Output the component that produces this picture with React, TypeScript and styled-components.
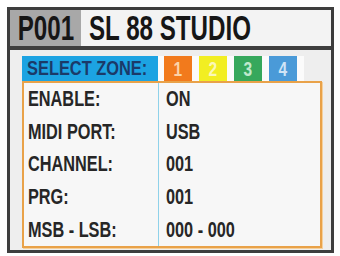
import { createGlobalStyle } from 'styled-components'
import styled from 'styled-components'

const GlobalStyle = createGlobalStyle`
  html, body {
    margin: 0;
    padding: 0;
    background: #ffffff;
  }
  body {
    font-family: 'Liberation Sans', Arial, sans-serif;
  }
`

type Zone = { id: number; bg: string; fg: string }

const ZONES: Zone[] = [
  { id: 1, bg: '#f27a1c', fg: '#fbd3a8' },
  { id: 2, bg: '#f2ee22', fg: '#fbf8b8' },
  { id: 3, bg: '#36a85c', fg: '#bfe8cc' },
  { id: 4, bg: '#4a9ad8', fg: '#cfe4f6' },
]

const ROWS: [string, string][] = [
  ['ENABLE:', 'ON'],
  ['MIDI PORT:', 'USB'],
  ['CHANNEL:', '001'],
  ['PRG:', '001'],
  ['MSB - LSB:', '000 - 000'],
]

export default function App() {
  return (
    <>
      <GlobalStyle />
      <Screen>
        <Header>
          <ProgramSlot>
            <Condensed $origin="center" $scale={0.69}>
              P001
            </Condensed>
          </ProgramSlot>
          <Title>
            <Condensed $scale={0.69}>SL 88 STUDIO</Condensed>
          </Title>
        </Header>

        <Body>
          <ZoneRow>
            <ZoneLabel>
              <Condensed $scale={0.82}>SELECT ZONE:</Condensed>
            </ZoneLabel>
            <ZoneTabs>
              {ZONES.map((z) => (
                <ZoneTab key={z.id} $bg={z.bg} $fg={z.fg}>
                  <Condensed $origin="center">{z.id}</Condensed>
                </ZoneTab>
              ))}
            </ZoneTabs>
          </ZoneRow>

          <Panel>
            {ROWS.map(([label, value]) => (
              <Row key={label}>
                <Label>
                  <Condensed>{label}</Condensed>
                </Label>
                <Value>
                  <Condensed>{value}</Condensed>
                </Value>
              </Row>
            ))}
          </Panel>
        </Body>
      </Screen>
    </>
  )
}

const Condensed = styled.span<{ $origin?: string; $scale?: number }>`
  display: inline-block;
  white-space: nowrap;
  transform: scaleX(${(p) => p.$scale ?? 0.74});
  transform-origin: ${(p) => p.$origin ?? 'left'} center;
`

const Screen = styled.div`
  box-sizing: border-box;
  margin: 7px 0 0 7px;
  width: 327px;
  height: 246px;
  border: 3px solid #3e3e3e;
  background: #eeeeee;
  display: flex;
  flex-direction: column;
`

const Header = styled.div`
  display: flex;
  height: 36px;
  border-bottom: 4px solid #3e3e3e;
  font-size: 35px;
  font-weight: 700;
  color: #161616;
`

const ProgramSlot = styled.div`
  width: 71px;
  background: #a8a8a8;
  display: flex;
  align-items: center;
  justify-content: center;
`

const Title = styled.div`
  flex: 1;
  background: #f3f3f3;
  display: flex;
  align-items: center;
  padding-left: 8px;
`

const Body = styled.div`
  display: flex;
  flex-direction: column;
  padding: 6px 0 0 12px;
`

const ZoneRow = styled.div`
  display: flex;
  height: 25px;
`

const ZoneLabel = styled.div`
  width: 131px;
  background: #1ca3e2;
  color: #1b3a68;
  font-size: 20px;
  font-weight: 700;
  display: flex;
  align-items: center;
  padding-left: 5px;
`

const ZoneTabs = styled.div`
  display: flex;
  gap: 7px;
  padding: 0 7px 0 6px;
  background: #fbfbfb;
`

const ZoneTab = styled.div<{ $bg: string; $fg: string }>`
  width: 28px;
  background: ${(p) => p.$bg};
  color: ${(p) => p.$fg};
  font-size: 21px;
  font-weight: 700;
  display: flex;
  align-items: center;
  justify-content: center;
`

const Panel = styled.div`
  box-sizing: border-box;
  width: 300px;
  height: 167px;
  border: 2px solid #e9a249;
  box-shadow: 1px 1px 0 #f5d09c;
  background: #f7f7f7;
  display: flex;
  flex-direction: column;
`

const Row = styled.div`
  flex: 1;
  display: flex;
  font-size: 22px;
  font-weight: 700;
  color: #262626;
`

const Label = styled.div`
  width: 135px;
  padding-left: 4px;
  box-sizing: border-box;
  border-right: 1px solid #8fd2ea;
  display: flex;
  align-items: center;
`

const Value = styled.div`
  flex: 1;
  padding-left: 7px;
  display: flex;
  align-items: center;
`
